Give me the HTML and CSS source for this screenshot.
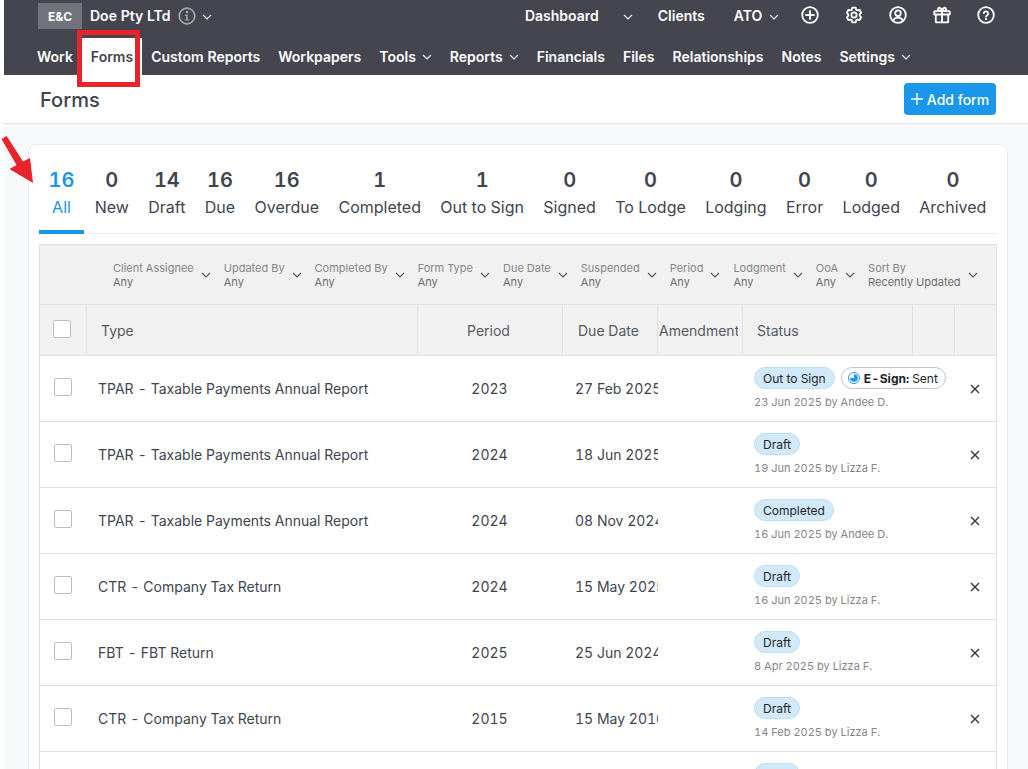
FILE: index.html
```html
<!DOCTYPE html>
<html lang="en">
<head>
<meta charset="utf-8">
<title>Forms</title>
<link rel="stylesheet" href="styles.css">
</head>
<body>
<svg class="sprite" width="0" height="0">
  <symbol id="chev" viewBox="0 0 10 6"><path d="M1 1l4 4 4-4" fill="none" stroke="currentColor" stroke-width="1.1"/></symbol>
</svg>
<div class="app">
  <nav class="nav">
    <div class="nav-top">
      <span class="org-badge">E&amp;C</span>
      <span class="org-name">Doe Pty LTd</span>
      <svg class="info" viewBox="0 0 18 18"><circle cx="9" cy="9" r="7.8" fill="none" stroke="currentColor" stroke-width="1.7"/><rect x="8" y="4" width="2.2" height="2.2" fill="currentColor"/><path d="M6.8 7.8h3v4.6h1.4v1.2H6.8v-1.2h1.4V9H6.8z" fill="currentColor"/></svg>
      <svg class="chev org-chev"><use href="#chev"/></svg>
      <a class="top-link dash">Dashboard</a>
      <svg class="chev dash-chev"><use href="#chev"/></svg>
      <a class="top-link clients">Clients</a>
      <a class="top-link ato">ATO</a>
      <svg class="chev ato-chev"><use href="#chev"/></svg>
      <span class="tools">
        <svg class="ico" viewBox="0 0 18 18"><circle cx="9" cy="9" r="7.8"/><path d="M9 5v8M5 9h8"/></svg>
        <svg class="ico" viewBox="0 0 18 18"><path d="M7.3 1.6h3.4l.5 2.1 1.2.7 2.1-.6 1.7 2.9-1.5 1.600v1.400l1.500 1.600-1.700 2.900-2.100-.6-1.200.7-.5 2.100H7.300l-.5-2.100-1.200-.7-2.100.6-1.700-2.900L3.300 9.700V8.300L1.800 6.700l1.700-2.900 2.100.6 1.200-.7z" stroke-linejoin="round"/><circle cx="9" cy="9" r="2.600"/></svg>
        <svg class="ico" viewBox="0 0 18 18"><circle cx="9" cy="9" r="7.800"/><circle cx="9" cy="7.200" r="2.800"/><path d="M4.200 14.800c.6-2.200 2.500-3.200 4.800-3.200s4.200 1 4.800 3.200"/></svg>
        <svg class="ico" viewBox="0 0 18 18"><rect x="1.200" y="5.200" width="15.600" height="3.300" rx=".6"/><path d="M2.800 8.500v7.200a.6.6 0 0 0 .6.6h11.200a.6.600 0 0 0 .6-.6V8.500M9 5.200v11.100M9 5.200C7.500 5.200 5 4.800 5 3.200 5 1.900 6.300 1.400 7.200 2 8.300 2.700 9 5.200 9 5.200zM9 5.200c1.500 0 4-.4 4-2 0-1.300-1.300-1.800-2.200-1.200C9.700 2.700 9 5.200 9 5.200z"/></svg>
        <svg class="ico" viewBox="0 0 18 18"><circle cx="9" cy="9" r="7.800"/><path d="M6.800 7.100a2.300 2.300 0 0 1 4.500.5c0 1.500-2.300 2-2.300 3"/><path d="M9 12.800v.4" stroke-width="2"/></svg>
      </span>
    </div>
    <div class="nav-main">
      <a class="nav-item">Work</a>
      <a class="nav-item active">Forms</a>
      <a class="nav-item">Custom Reports</a>
      <a class="nav-item">Workpapers</a>
      <a class="nav-item">Tools<svg class="chev"><use href="#chev"/></svg></a>
      <a class="nav-item">Reports<svg class="chev"><use href="#chev"/></svg></a>
      <a class="nav-item">Financials</a>
      <a class="nav-item">Files</a>
      <a class="nav-item">Relationships</a>
      <a class="nav-item">Notes</a>
      <a class="nav-item">Settings<svg class="chev"><use href="#chev"/></svg></a>
    </div>
  </nav>

  <header class="page-head">
    <h1 class="page-title">Forms</h1>
    <button class="add-btn"><svg class="add-plus" viewBox="0 0 12 12"><path d="M6 0v12M0 6h12"/></svg>Add form</button>
  </header>

  <main class="main">
    <section class="card">
      <div class="tabs">
        <div class="tab tab-active"><b>16</b><span>All</span></div>
        <div class="tab"><b>0</b><span>New</span></div>
        <div class="tab"><b>14</b><span>Draft</span></div>
        <div class="tab"><b>16</b><span>Due</span></div>
        <div class="tab"><b>16</b><span>Overdue</span></div>
        <div class="tab"><b>1</b><span>Completed</span></div>
        <div class="tab"><b>1</b><span>Out to Sign</span></div>
        <div class="tab"><b>0</b><span>Signed</span></div>
        <div class="tab"><b>0</b><span>To Lodge</span></div>
        <div class="tab"><b>0</b><span>Lodging</span></div>
        <div class="tab"><b>0</b><span>Error</span></div>
        <div class="tab"><b>0</b><span>Lodged</span></div>
        <div class="tab"><b>0</b><span>Archived</span></div>
      </div>

      <div class="table">
        <div class="filters">
          <div class="filter"><div><span>Client Assignee</span><em>Any</em></div><svg class="chev"><use href="#chev"/></svg></div>
          <div class="filter"><div><span>Updated By</span><em>Any</em></div><svg class="chev"><use href="#chev"/></svg></div>
          <div class="filter"><div><span>Completed By</span><em>Any</em></div><svg class="chev"><use href="#chev"/></svg></div>
          <div class="filter"><div><span>Form Type</span><em>Any</em></div><svg class="chev"><use href="#chev"/></svg></div>
          <div class="filter"><div><span>Due Date</span><em>Any</em></div><svg class="chev"><use href="#chev"/></svg></div>
          <div class="filter"><div><span>Suspended</span><em>Any</em></div><svg class="chev"><use href="#chev"/></svg></div>
          <div class="filter"><div><span>Period</span><em>Any</em></div><svg class="chev"><use href="#chev"/></svg></div>
          <div class="filter"><div><span>Lodgment</span><em>Any</em></div><svg class="chev"><use href="#chev"/></svg></div>
          <div class="filter"><div><span>OoA</span><em>Any</em></div><svg class="chev"><use href="#chev"/></svg></div>
          <div class="filter"><div><span>Sort By</span><em>Recently Updated</em></div><svg class="chev"><use href="#chev"/></svg></div>
        </div>

        <div class="row head">
          <div class="c c-check"><i class="box"></i></div>
          <div class="c c-type">Type</div>
          <div class="c c-period">Period</div>
          <div class="c c-due">Due Date</div>
          <div class="c c-amend">Amendment</div>
          <div class="c c-status">Status</div>
          <div class="c"></div>
          <div class="c"></div>
        </div>

        <div class="row">
          <div class="c c-check"><i class="box"></i></div>
          <div class="c c-type">TPAR <u>-</u> Taxable Payments Annual Report</div>
          <div class="c c-period">2023</div>
          <div class="c c-due">27 Feb 2025</div>
          <div class="c c-amend"></div>
          <div class="c c-status"><div class="pills"><span class="pill">Out to Sign</span><span class="pill pill-out"><svg class="esign" viewBox="0 0 12 12"><circle cx="6" cy="6" r="5.500" fill="#fff" stroke="#1a97ea" stroke-width="1"/><path d="M6 6V2.200A3.800 3.800 0 1 1 2.200 6z" fill="#1a97ea"/></svg><b>E<s>-</s>Sign:</b> Sent</span></div><small>23 Jun 2025 by Andee D.</small></div>
          <div class="c"></div>
          <div class="c c-x"><svg class="x" viewBox="0 0 10 10"><path d="M1 1l8 8M9 1L1 9"/></svg></div>
        </div>
        <div class="row">
          <div class="c c-check"><i class="box"></i></div>
          <div class="c c-type">TPAR <u>-</u> Taxable Payments Annual Report</div>
          <div class="c c-period">2024</div>
          <div class="c c-due">18 Jun 2025</div>
          <div class="c c-amend"></div>
          <div class="c c-status"><div class="pills"><span class="pill">Draft</span></div><small>19 Jun 2025 by Lizza F.</small></div>
          <div class="c"></div>
          <div class="c c-x"><svg class="x" viewBox="0 0 10 10"><path d="M1 1l8 8M9 1L1 9"/></svg></div>
        </div>
        <div class="row">
          <div class="c c-check"><i class="box"></i></div>
          <div class="c c-type">TPAR <u>-</u> Taxable Payments Annual Report</div>
          <div class="c c-period">2024</div>
          <div class="c c-due">08 Nov 2024</div>
          <div class="c c-amend"></div>
          <div class="c c-status"><div class="pills"><span class="pill">Completed</span></div><small>16 Jun 2025 by Andee D.</small></div>
          <div class="c"></div>
          <div class="c c-x"><svg class="x" viewBox="0 0 10 10"><path d="M1 1l8 8M9 1L1 9"/></svg></div>
        </div>
        <div class="row">
          <div class="c c-check"><i class="box"></i></div>
          <div class="c c-type">CTR <u>-</u> Company Tax Return</div>
          <div class="c c-period">2024</div>
          <div class="c c-due">15 May 2025</div>
          <div class="c c-amend"></div>
          <div class="c c-status"><div class="pills"><span class="pill">Draft</span></div><small>16 Jun 2025 by Lizza F.</small></div>
          <div class="c"></div>
          <div class="c c-x"><svg class="x" viewBox="0 0 10 10"><path d="M1 1l8 8M9 1L1 9"/></svg></div>
        </div>
        <div class="row">
          <div class="c c-check"><i class="box"></i></div>
          <div class="c c-type">FBT <u>-</u> FBT Return</div>
          <div class="c c-period">2025</div>
          <div class="c c-due">25 Jun 2024</div>
          <div class="c c-amend"></div>
          <div class="c c-status"><div class="pills"><span class="pill">Draft</span></div><small>8 Apr 2025 by Lizza F.</small></div>
          <div class="c"></div>
          <div class="c c-x"><svg class="x" viewBox="0 0 10 10"><path d="M1 1l8 8M9 1L1 9"/></svg></div>
        </div>
        <div class="row">
          <div class="c c-check"><i class="box"></i></div>
          <div class="c c-type">CTR <u>-</u> Company Tax Return</div>
          <div class="c c-period">2015</div>
          <div class="c c-due">15 May 2016</div>
          <div class="c c-amend"></div>
          <div class="c c-status"><div class="pills"><span class="pill">Draft</span></div><small>14 Feb 2025 by Lizza F.</small></div>
          <div class="c"></div>
          <div class="c c-x"><svg class="x" viewBox="0 0 10 10"><path d="M1 1l8 8M9 1L1 9"/></svg></div>
        </div>
        <div class="row">
          <div class="c c-check"><i class="box"></i></div>
          <div class="c c-type"></div>
          <div class="c c-period"></div>
          <div class="c c-due"></div>
          <div class="c c-amend"></div>
          <div class="c c-status"><div class="pills"><span class="pill">Draft</span></div></div>
          <div class="c"></div>
          <div class="c c-x"></div>
        </div>
      </div>
    </section>
  </main>
</div>

<div class="callout-box"></div>
<svg class="callout-arrow" viewBox="0 0 36 50"><path d="M1.500 4L6.700 1 23 26.500 30 23l3 25-23.500-14 7-4z" fill="#e8232a"/></svg>
</body>
</html>
```
FILE: styles.css
```css
* { box-sizing: border-box; }
html, body { margin: 0; height: 769px; overflow: hidden; background: #fff; }
body { font-family: Inter, "Liberation Sans", sans-serif; color: #3f4450; font-variant-numeric: tabular-nums; }
.sprite { position: absolute; }
.app { margin-left: 4px; }
.chev { width: 10px; height: 6px; flex: none; color: currentColor; }

.nav { height: 75px; background: #454550; color: #fff; font-weight: 600; font-size: 14px; }
.nav-top { height: 38px; display: flex; align-items: flex-start; padding: 3px 0 0 34px; }
.org-badge { width: 44px; height: 26px; background: #72727c; font-size: 12px; font-weight: 700; display: flex; align-items: center; justify-content: center; }
.org-name { margin-left: 8px; line-height: 26px; }
.info { width: 18px; height: 18px; margin: 4px 0 0 8px; color: #a8a8af; }
.org-chev { margin: 11px 0 0 6px; }
.top-link { line-height: 26px; }
.dash { margin-left: 312.5px; }
.dash-chev { margin: 11px 0 0 24px; }
.clients { margin-left: 25px; }
.ato { margin-left: 29px; }
.ato-chev { margin: 11px 0 0 7px; }
.tools { display: flex; gap: 26px; margin: 3px 0 0 21.5px; }
.ico { width: 18px; height: 18px; fill: none; stroke: #fff; stroke-width: 1.8; stroke-linecap: round; overflow: visible; }

.nav-main { height: 37px; display: flex; padding-left: 24px; }
.nav-item { display: flex; align-items: center; gap: 6px; padding: 0 9px; height: 37px; }
.nav-item.active { background: #fff; color: #454550; }

.page-head { height: 49px; display: flex; align-items: flex-start; justify-content: space-between; padding: 8px 32px 0 36px; border-bottom: 1px solid #e2e4e8; }
.page-title { margin: 1px 0 0; font-size: 20px; font-weight: 500; line-height: 32px; color: #3f4450; }
.add-btn { width: 92px; height: 32px; border: 0; border-radius: 4px; background: #1a97ea; color: #fff; font: 500 14px Inter, sans-serif; display: flex; align-items: center; justify-content: center; gap: 4px; padding: 0; }
.add-plus { width: 12px; height: 12px; fill: none; stroke: #fff; stroke-width: 1.4; }

.main { background: #f8f9fb; padding: 20px 20px 0 24px; height: 645px; }
.card { background: #fff; border: 1px solid #e9ebee; border-radius: 8px; padding: 16px 10px 0; height: 700px; }

.tabs { display: flex; border-bottom: 1px solid #e9ebee; height: 73px; }
.tab { padding: 0 9.7px; height: 73px; display: flex; flex-direction: column; align-items: center; position: relative; white-space: nowrap; flex: none; }
.tab b { font-size: 20px; font-weight: 600; line-height: 38px; margin-bottom: -2px; color: #3f4450; }
.tab span { font-size: 16px; line-height: 20px; margin-top: 0; color: #3f4450; }
.tab-active { width: 45px; margin-right: 1px; border-bottom: 4px solid #1a97ea; }
.tab-active b, .tab-active span { color: #1a97ea; }

.table { margin-top: 10px; border: 1px solid #e0e0e0; border-bottom: 0; }
.filters { height: 60px; background: #f1f1f1; display: flex; align-items: center; padding-left: 73px; gap: 13px; border-bottom: 1px solid #e0e0e0; }
.filter { display: flex; align-items: center; gap: 7px; color: #85858a; font-size: 11px; line-height: 14px; }
.filter span, .filter em { display: block; font-style: normal; white-space: nowrap; }
.filter em { color: #6c6c72; }
.filter .chev { color: #55555a; margin-top: 1px; }

.row { display: grid; grid-template-columns: 46px 331px 145px 96px 84px 170px 42px 42px; height: 66px; border-bottom: 1px solid #e0e0e0; font-size: 14px; color: #3f4450; }
.row.head { grid-template-columns: 46px 331px 145px 95px 85px 170px 42px 42px; height: 51px; background: #f1f1f1; color: #555a64; }
.c { display: flex; align-items: center; white-space: nowrap; overflow: hidden; min-width: 0; }
.head .c { border-left: 1px solid #e0e0e0; }
.head .c-check { border-left: 0; }
.c-check { padding-left: 14px; }
.head .c-check { padding-left: 13px; }
.box { width: 18px; height: 18px; background: #fff; border: 1px solid #bdbdbd; border-radius: 2px; margin-top: -3px; }
.head .box { margin-top: -2px; }
.c-type { padding-left: 12px; }
.head .c-type { padding-left: 14px; }
.c-type u { text-decoration: none; padding: 0 4px; }
.c-period { justify-content: center; }
.head .c-period { padding-right: 3px; }
.c-due { padding-left: 13px; }
.head .c-due { padding-left: 15px; }
.head .c-amend { padding-left: 1px; margin-right: 4px; }
.c-status { padding-left: 12px; flex-direction: column; align-items: flex-start; justify-content: flex-start; padding-top: 11px; overflow: visible; }
.head .c-status { padding: 0 0 0 14px; flex-direction: row; align-items: center; }
.pills { display: flex; gap: 6px; }
.pill { height: 22px; display: inline-flex; align-items: center; padding: 0 8px; border-radius: 11px; background: #d2e9fa; border: 1px solid #bcdff7; font-size: 12px; color: #22252b; }
.pill-out { background: #fff; border-color: #c4c4c4; padding: 0 7px 0 6px; }
.pill-out b { font-weight: 700; margin-right: 3px; }
.pill-out s { text-decoration: none; padding: 0 .5px; }
.esign { width: 12px; height: 12px; margin-right: 4px; }
.c-status small { font-size: 11px; line-height: 14px; margin-top: 6px; color: #85858a; }
.c-x { justify-content: center; }
.x { width: 10px; height: 10px; fill: none; stroke: #33363d; stroke-width: 1.4; }

.callout-box { position: absolute; left: 77px; top: 30px; width: 63px; height: 57px; border: 5px solid #e8232a; }
.callout-arrow { position: absolute; left: 0; top: 135px; width: 36px; height: 50px; overflow: visible; }
```
